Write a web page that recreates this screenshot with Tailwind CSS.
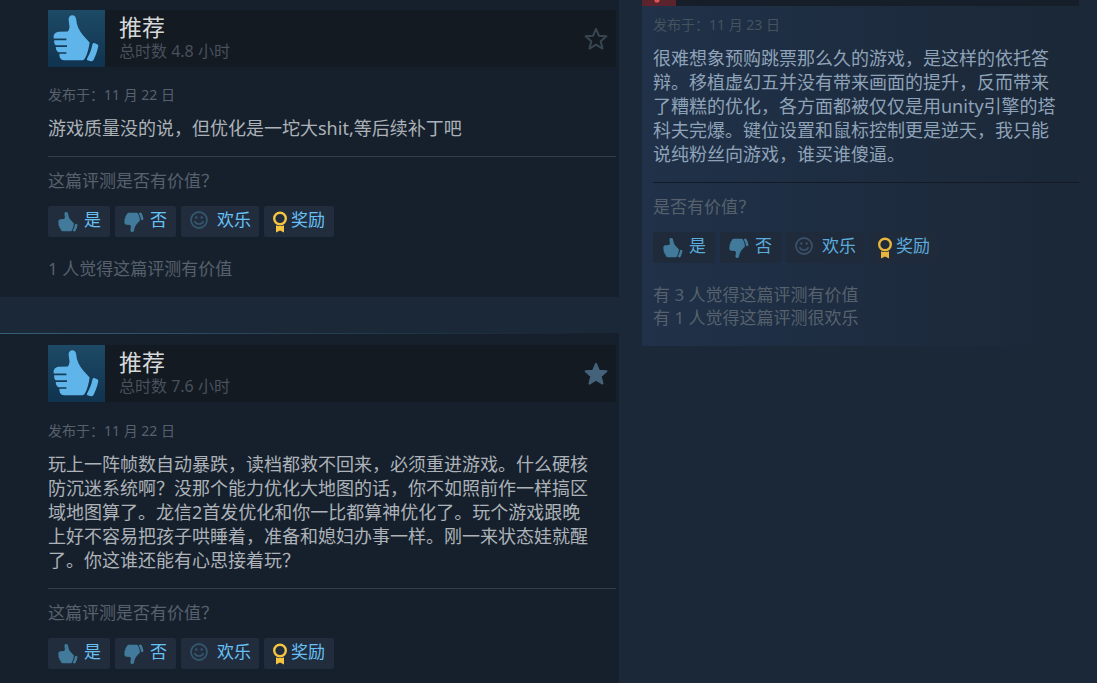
<!DOCTYPE html>
<html lang="zh-CN">
<head>
    <meta charset="UTF-8" />
    <meta name="viewport" content="width=device-width, initial-scale=1.0" />
    <title>用户评测</title>
    <script src="https://cdn.jsdelivr.net/npm/@tailwindcss/browser@4"></script>
</head>
<body class="min-h-screen bg-[#1b2838] font-['Noto_Sans','Noto_Sans_CJK_SC',sans-serif] text-[17px] leading-6 text-[#56616d]">
    <!-- Shared icons -->
    <svg class="hidden" aria-hidden="true">
        <symbol id="thumb" viewBox="0 0 57 57">
            <path fill="currentColor" d="M20.6 9.5C20.6 6.8 22.2 5.2 24.2 5.2C26.7 5.2 28 7 28.2 9.6C28.6 15.5 31 20.5 35 25.2L41.6 32.4C40.8 38.5 39.4 44 37 48.2C36.2 49.6 35.2 50.2 33.6 50.2H16.4C13.4 50.2 11.6 48.4 11.4 45.2V43.8H18.4V42.2H10.6C8.8 41.4 7.8 39.6 7.8 37.2V36.9H19V35.3H7.6C6.4 34 6 32.4 6.2 30.2H18.4V28.6H5.8C5 24.4 7.2 22.2 10.6 21.8L19.8 21.4C21.6 19 21.8 17 21.2 14.4Z" />
            <path fill="currentColor" d="M44.4 34.4C44.8 33.2 45.6 32.8 46.8 33.2L49.2 34.2C50.2 34.7 50.5 35.4 50.2 36.6C49.2 41.6 47.6 46 45.6 49.8C45 51 44.2 51.4 43 51.2L40.2 50.6C39 50.2 38.6 49.4 39.2 48.2C41.6 44 43.4 39.4 44.4 34.4Z" />
        </symbol>
        <symbol id="thumb-small" viewBox="0 0 24 24">
            <path fill="currentColor" d="M8.4 4C8.4 2.6 9.2 2 10.2 2C11.4 2 12 2.8 12.2 4.2C12.4 6.6 13.6 8.8 15.2 10.6L18 13.6C17.6 16.4 17 18.6 16 20.2C15.6 20.9 15.2 21.2 14.4 21.2H7C5.6 21.2 4.8 20.4 4.8 19.2C3.8 18.6 3.4 17.8 3.4 16.6C2.6 15.6 2.4 14.6 2.6 13.4C1.8 11 2.6 9.4 4.4 9.2L8.2 9C8.8 8 9 7.2 8.8 6Z" />
            <path fill="currentColor" d="M19 14.4C19.2 13.8 19.5 13.7 20 13.8L21 14.2C21.5 14.4 21.6 14.8 21.5 15.2C21 17.4 20.4 19.2 19.6 20.8C19.3 21.4 18.9 21.5 18.4 21.4L17.4 21.1C16.8 20.9 16.7 20.6 17 20C18 18.4 18.6 16.6 19 14.4Z" />
        </symbol>
        <symbol id="smile" viewBox="0 0 18 18">
            <circle cx="9" cy="9" r="8" fill="none" stroke="currentColor" stroke-width="1.8" />
            <circle cx="6.3" cy="6.5" r="1.3" fill="currentColor" />
            <circle cx="11.7" cy="6.5" r="1.3" fill="currentColor" />
            <path d="M4.6 10C5.6 14 12.4 14 13.4 10" fill="none" stroke="currentColor" stroke-width="1.6" />
        </symbol>
        <symbol id="award" viewBox="0 0 16 22">
            <circle cx="8" cy="7.5" r="5.8" fill="none" stroke="currentColor" stroke-width="2.4" />
            <path fill="currentColor" d="M4 14.2C6.4 15.4 9.6 15.4 12 14.2V21.5L8 19.4L4 21.5Z" />
        </symbol>
        <symbol id="star" viewBox="0 0 24 24">
            <path d="M12 1.8L14.9 8.7L22.4 9.3L16.7 14.2L18.5 21.6L12 17.6L5.5 21.6L7.3 14.2L1.6 9.3L9.1 8.7Z" stroke="currentColor" stroke-width="2" stroke-linejoin="round" />
        </symbol>
    </svg>

    <main class="grid grid-cols-[619fr_455fr] items-start gap-[23px]">
        <!-- Left column -->
        <div class="space-y-9">
            <article class="bg-[#16202c] pt-[10px] pr-[3px] pb-4 pl-12">
                <header class="flex items-center bg-[#131a22]">
                    <div class="bg-linear-to-b from-[#1d4a66] to-[#10334f] text-[#5fb4ea]">
                        <svg class="size-[57px]"><use href="#thumb" /></svg>
                    </div>
                    <div class="ml-[14px] grow">
                        <h2 class="text-[23px] leading-6 text-[#d6d7d8]">推荐</h2>
                        <p class="text-[16px] leading-6 text-[#48515c]">总时数 4.8 小时</p>
                    </div>
                    <button class="mr-2 text-[#384651]" aria-label="收藏">
                        <svg class="size-6 fill-none"><use href="#star" /></svg>
                    </button>
                </header>
                <p class="mt-4 text-[14px] text-[#56616d]">发布于：11 月 22 日</p>
                <p class="mt-[9px] pr-6 text-[18px] text-[#acb2b8]">游戏质量没的说，但优化是一坨大shit,等后续补丁吧</p>
                <div class="mt-4 border-t border-[#323f4c] pt-3">
                    <p>这篇评测是否有价值？</p>
                    <div class="mt-[13px] flex gap-[5px] text-[#67c1f5]">
                        <button class="flex h-[31px] items-center gap-1 rounded-xs bg-[#212c3d] pr-[9px] pb-[3px] pl-2"><svg class="mt-1 size-6 text-[#417a9b]"><use href="#thumb-small" /></svg>是</button>
                        <button class="flex h-[31px] items-center gap-1 rounded-xs bg-[#212c3d] pr-[9px] pb-[3px] pl-[7px]"><svg class="mt-1 size-6 -scale-y-100 text-[#417a9b]"><use href="#thumb-small" /></svg>否</button>
                        <button class="flex h-[31px] items-center gap-[9px] rounded-xs bg-[#212c3d] pr-2 pb-[3px] pl-[9px]"><svg class="size-[18px] text-[#34566d]"><use href="#smile" /></svg>欢乐</button>
                        <button class="flex h-[31px] items-center gap-[3px] rounded-xs bg-[#212c3d] pr-[9px] pb-[3px] pl-2"><svg class="mt-[3px] h-[22px] w-4 text-[#f5c541]"><use href="#award" /></svg>奖励</button>
                    </div>
                    <p class="mt-5">1 人觉得这篇评测有价值</p>
                </div>
            </article>

            <article class="bg-[#16202c] pr-[3px] pb-4">
                <div class="h-px bg-linear-to-r from-[#35607a] to-transparent"></div>
                <div class="pt-[11px] pl-12">
                    <header class="flex items-center bg-[#131a22]">
                        <div class="bg-linear-to-b from-[#1d4a66] to-[#10334f] text-[#5fb4ea]">
                            <svg class="size-[57px]"><use href="#thumb" /></svg>
                        </div>
                        <div class="ml-[14px] grow">
                            <h2 class="text-[23px] leading-6 text-[#d6d7d8]">推荐</h2>
                            <p class="text-[16px] leading-6 text-[#48515c]">总时数 7.6 小时</p>
                        </div>
                        <button class="mr-2 text-[#45627b]" aria-label="取消收藏">
                            <svg class="size-6 fill-current"><use href="#star" /></svg>
                        </button>
                    </header>
                    <p class="mt-[17px] text-[14px] text-[#56616d]">发布于：11 月 22 日</p>
                    <p class="mt-[9px] pr-6 text-[18px] text-[#acb2b8]">玩上一阵帧数自动暴跌，读档都救不回来，必须重进游戏。什么硬核防沉迷系统啊？没那个能力优化大地图的话，你不如照前作一样搞区域地图算了。龙信2首发优化和你一比都算神优化了。玩个游戏跟晚上好不容易把孩子哄睡着，准备和媳妇办事一样。刚一来状态娃就醒了。你这谁还能有心思接着玩？</p>
                    <div class="mt-4 border-t border-[#323f4c] pt-3">
                        <p>这篇评测是否有价值？</p>
                        <div class="mt-[13px] flex gap-[5px] text-[#67c1f5]">
                            <button class="flex h-[31px] items-center gap-1 rounded-xs bg-[#212c3d] pr-[9px] pb-[3px] pl-2"><svg class="mt-1 size-6 text-[#417a9b]"><use href="#thumb-small" /></svg>是</button>
                            <button class="flex h-[31px] items-center gap-1 rounded-xs bg-[#212c3d] pr-[9px] pb-[3px] pl-[7px]"><svg class="mt-1 size-6 -scale-y-100 text-[#417a9b]"><use href="#thumb-small" /></svg>否</button>
                            <button class="flex h-[31px] items-center gap-[9px] rounded-xs bg-[#212c3d] pr-2 pb-[3px] pl-[9px]"><svg class="size-[18px] text-[#34566d]"><use href="#smile" /></svg>欢乐</button>
                            <button class="flex h-[31px] items-center gap-[3px] rounded-xs bg-[#212c3d] pr-[9px] pb-[3px] pl-2"><svg class="mt-[3px] h-[22px] w-4 text-[#f5c541]"><use href="#award" /></svg>奖励</button>
                        </div>
                    </div>
                </div>
            </article>
        </div>

        <!-- Right column -->
        <article class="bg-linear-to-r from-[#203149] to-[#1b2838] to-90% pb-[17px]">
            <div class="mr-[18px] h-[6px] bg-[#151e29]">
                <svg class="h-[6px] w-[34px] bg-[#5b232b]" viewBox="0 0 34 6"><circle cx="15" cy="0" r="2.6" fill="#e0555a" /></svg>
            </div>
            <div class="pr-[18px] pl-[11px]">
                <p class="mt-[7px] text-[14px] text-[#46535f]">发布于：11 月 23 日</p>
                <p class="mt-[9px] pr-4 text-[18px] text-[#8fa3b8]">很难想象预购跳票那么久的游戏，是这样的依托答辩。移植虚幻五并没有带来画面的提升，反而带来了糟糕的优化，各方面都被仅仅是用unity引擎的塔科夫完爆。键位设置和鼠标控制更是逆天，我只能说纯粉丝向游戏，谁买谁傻逼。</p>
                <div class="mt-4 border-t border-[#111a25] pt-3">
                    <p>是否有价值？</p>
                    <div class="mt-[13px] flex gap-[5px] text-[#5cacdb]">
                        <button class="flex h-[31px] items-center gap-1 rounded-xs bg-[#1f2a3b] pr-[9px] pb-[3px] pl-2"><svg class="mt-1 size-6 text-[#417a9b]"><use href="#thumb-small" /></svg>是</button>
                        <button class="flex h-[31px] items-center gap-1 rounded-xs bg-[#1f2a3b] pr-[9px] pb-[3px] pl-[7px]"><svg class="mt-1 size-6 -scale-y-100 text-[#417a9b]"><use href="#thumb-small" /></svg>否</button>
                        <button class="flex h-[31px] items-center gap-[9px] rounded-xs bg-[#1f2a3b] pr-2 pb-[3px] pl-[9px]"><svg class="size-[18px] text-[#3a5068]"><use href="#smile" /></svg>欢乐</button>
                        <button class="flex h-[31px] items-center gap-[3px] rounded-xs bg-[#1f2a3b] pr-[9px] pb-[3px] pl-2"><svg class="mt-[3px] h-[22px] w-4 text-[#e8b63c]"><use href="#award" /></svg>奖励</button>
                    </div>
                    <p class="mt-5 leading-[23px]">有 3 人觉得这篇评测有价值<br />有 1 人觉得这篇评测很欢乐</p>
                </div>
            </div>
        </article>
    </main>
</body>
</html>
